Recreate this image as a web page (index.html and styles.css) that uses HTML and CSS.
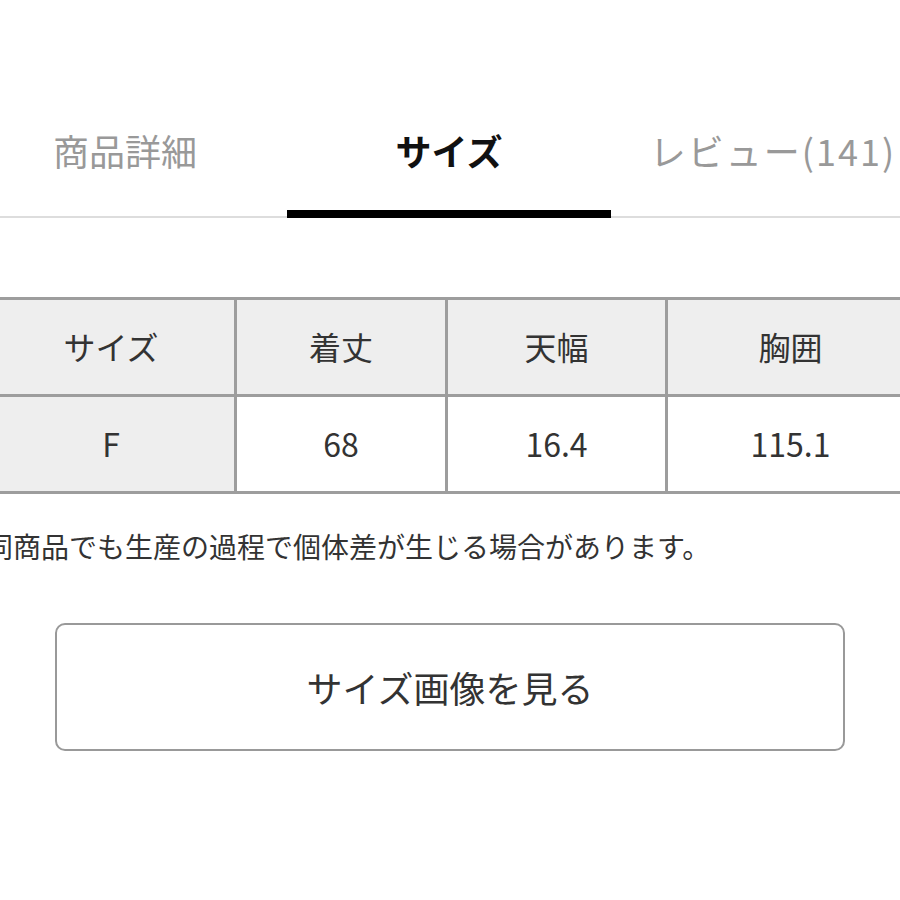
FILE: index.html
```html
<!DOCTYPE html>
<html lang="ja">
<head>
<meta charset="utf-8">
<title>サイズ</title>
<link rel="stylesheet" href="styles.css">
</head>
<body>
<div class="page">
  <nav class="tabs">
    <div class="tab">商品詳細</div>
    <div class="tab active">サイズ</div>
    <div class="tab tab-wide">レビュー(141)</div>
  </nav>
  <section class="content">
    <table class="size-table">
      <colgroup>
        <col class="c1"><col class="c2"><col class="c3"><col class="c4">
      </colgroup>
      <thead>
        <tr><th>サイズ</th><th>着丈</th><th>天幅</th><th>胸囲</th></tr>
      </thead>
      <tbody>
        <tr><th>F</th><td>68</td><td>16.4</td><td>115.1</td></tr>
      </tbody>
    </table>
    <p class="note">同商品でも生産の過程で個体差が生じる場合があります。</p>
    <button class="btn" type="button">サイズ画像を見る</button>
  </section>
</div>
</body>
</html>
```
FILE: styles.css
```css
html, body {
  margin: 0;
  padding: 0;
  background: #fff;
  overflow: hidden;
}
body {
  font-family: "Noto Sans CJK JP", "Noto Sans", sans-serif;
  color: #333;
}
.page {
  width: 972px;
  margin-left: -37px;
}
.tabs {
  display: flex;
  border-bottom: 2px solid #dddddd;
}
.tab {
  flex: 1;
  text-align: center;
  font-size: 36px;
  line-height: 50px;
  color: #999;
  padding-top: 125px;
  padding-bottom: 35px;
  border-bottom: 8px solid transparent;
  margin-bottom: -2px;
  white-space: nowrap;
}
.tab-wide {
  letter-spacing: 2px;
}
.tab.active {
  color: #111;
  font-weight: 700;
  border-bottom-color: #000;
}
.content {
  padding: 0 22px;
}
.size-table {
  margin-top: 79px;
  width: 928px;
  table-layout: fixed;
  border-collapse: collapse;
  font-size: 32px;
  color: #333;
}
.c1 { width: 249px; }
.c2 { width: 211px; }
.c3 { width: 220px; }
.c4 { width: 248px; }
.size-table th,
.size-table td {
  border: 3px solid #9d9d9d;
  height: 91px;
  padding: 0 0 3px;
  text-align: center;
  vertical-align: middle;
  font-weight: 400;
}
.size-table th {
  background: #eeeeee;
}
.size-table td {
  background: #fff;
}
.note {
  margin: 32px 0 0;
  font-size: 28px;
  line-height: 40px;
  color: #333;
  white-space: nowrap;
}
.btn {
  display: block;
  width: 790px;
  height: 128px;
  margin: 57px 0 0 70px;
  border: 2px solid #999;
  border-radius: 10px;
  background: #fff;
  font-family: inherit;
  font-size: 36px;
  color: #333;
  cursor: pointer;
}
```
